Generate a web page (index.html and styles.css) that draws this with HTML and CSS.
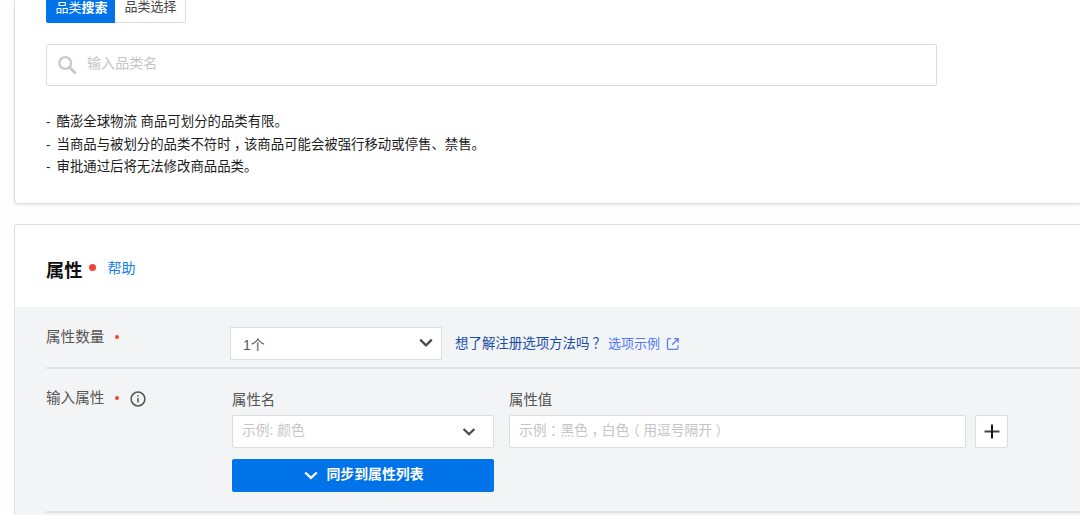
FILE: index.html
```html
<!DOCTYPE html>
<html lang="zh-CN">
<head>
<meta charset="utf-8">
<title>商品注册</title>
<link rel="stylesheet" href="styles.css">
</head>
<body>
<main class="page">
  <section class="card category">
    <div class="tabs">
      <button class="tab active">品类<b>搜索</b></button>
      <button class="tab">品类选择</button>
    </div>
    <div class="search">
      <svg width="20" height="20" viewBox="0 0 20 20" fill="none" stroke="#c9c9c9"><circle cx="8.2" cy="8" r="5.9" stroke-width="2.4"/><path d="M12.5 12.3l6.2 6.2" stroke-width="3"/></svg>
      <span class="placeholder">输入品类名</span>
    </div>
    <ul class="notes">
      <li>酷澎全球物流 商品可划分的品类有限。</li>
      <li>当商品与被划分的品类不符时<span class="mid">，</span>该商品可能会被强行移动或停售、禁售。</li>
      <li>审批通过后将无法修改商品品类。</li>
    </ul>
  </section>

  <section class="card attributes">
    <header class="head">
      <h2>属性</h2><i class="dot big"></i><a class="help">帮助</a>
    </header>
    <div class="form">
      <div class="row count">
        <div class="label"><span>属性数量</span><i class="dot"></i></div>
        <div class="select">
          <span>1个</span>
          <svg width="14" height="10" viewBox="0 0 14 10" fill="none" stroke="#4a4a4a" stroke-width="2.2"><path d="M1.2 1.6L7 7.4l5.8-5.8"/></svg>
        </div>
        <span class="question">想了解注册选项方法吗<span class="ask">？</span></span>
        <a class="example">选项示例</a>
        <svg class="external" width="14" height="14" viewBox="0 0 14 14" fill="none" stroke="#5c7cfa" stroke-width="1.3"><path d="M5 1.7H2.7a1.2 1.2 0 0 0-1.2 1.2v8.2a1.2 1.2 0 0 0 1.2 1.2h8.1a1.2 1.2 0 0 0 1.2-1.2V8.3M8 1.7h4.2v4M12.1 1.8L6.2 7.7"/></svg>
      </div>
      <div class="row entry">
        <div class="label"><span>输入属性</span><i class="dot"></i>
          <svg class="info" width="16" height="16" viewBox="0 0 16 16" fill="none" stroke="#555"><circle cx="8" cy="8" r="6.9" stroke-width="1.5"/><path d="M8 7v4.4M8 4.3v1.5" stroke-width="1.5"/></svg>
        </div>
        <div class="field name">
          <label>属性名</label>
          <div class="input">
            <span class="placeholder">示例: 颜色</span>
            <svg width="14" height="10" viewBox="0 0 14 10" fill="none" stroke="#4a4a4a" stroke-width="2.2"><path d="M1.6 2L7 7.3 12.4 2"/></svg>
          </div>
          <button class="sync">
            <svg width="14" height="10" viewBox="0 0 14 10" fill="none" stroke="#fff" stroke-width="2.2"><path d="M1.2 1.5L7 6.9l5.8-5.4"/></svg>
            <span>同步到属性列表</span>
          </button>
        </div>
        <div class="field value">
          <label>属性值</label>
          <div class="input"><span class="placeholder">示例<span class="mid">：</span>黑色<span class="mid">，</span>白色<span class="mid">（</span>用逗号隔开<span class="mid">）</span></span></div>
        </div>
        <button class="add" aria-label="添加">
          <svg width="16" height="16" viewBox="0 0 16 16" fill="none"><path d="M.5 7.5h15" stroke="#444" stroke-width="2"/><path d="M8 .5v14" stroke="#181820" stroke-width="2"/></svg>
        </button>
      </div>
    </div>
  </section>
</main>
</body>
</html>
```
FILE: styles.css
```css
* { box-sizing: border-box; }
body {
  margin: 0;
  height: 515px;
  overflow: hidden;
  background: #fefefe;
  color: #222;
  font-family: "Liberation Sans", "Noto Sans CJK SC", sans-serif;
  font-size: 14px;
}
button { margin: 0; padding: 0; font: inherit; }
svg { display: block; flex: none; }
.page { display: flex; flex-direction: column; gap: 20px; padding-left: 14px; }
.card { width: 100%; border: 1px solid #dfe0e4; border-right: 0; border-radius: 4px 0 0 4px; background: #fff; }
.category {
  height: 204px;
  padding-left: 31px;
  border-top: 0;
  border-radius: 0 0 0 4px;
  box-shadow: 0 1px 3px rgba(0, 0, 0, .1);
}
.tabs { display: flex; height: 23px; }
.tab {
  width: 71px;
  height: 23px;
  padding: 0 0 8px 1px;
  border: 1px solid #ddd;
  border-width: 0 1px 1px 0;
  border-radius: 0 0 2px 0;
  background: #fff;
  color: #444;
  font-size: 13px;
  line-height: 14px;
}
.tab.active {
  width: 69px;
  padding: 0 0 8px 2px;
  border: 0;
  border-radius: 0 0 0 2px;
  background: #0073e9;
  color: #fff;
}
.search {
  display: flex;
  align-items: center;
  gap: 10px;
  width: 891px;
  height: 42px;
  margin-top: 21px;
  padding-left: 10px;
  border: 1px solid #ddd;
  border-radius: 2px;
}
.search .placeholder { font-size: 14.1px; padding-bottom: 6px; }
.placeholder { color: #c5c5c5; white-space: nowrap; }
.notes { margin: 25px 0 0; padding: 0; list-style: none; color: #1c1c1c; font-size: 13.4px; line-height: 22.6px; }
.notes li { height: 22.6px; }
.notes li::before { content: "-"; display: inline-block; width: 10.5px; }
/* Full-width punctuation centred in its cell */
.mid { margin: 0 .25em; font-feature-settings: "halt"; }
.ask { margin-left: 3px; }
.attributes { height: 291px; border-bottom: 0; border-bottom-left-radius: 0; }
.head { display: flex; height: 82px; padding: 31px 0 0 31px; }
.head h2 { margin: 0; font-size: 18.2px; line-height: 31px; color: #111; }
.dot { flex: none; width: 4px; height: 4px; border-radius: 50%; background: #f44336; }
.dot.big { width: 7px; height: 7px; margin: 8px 0 0 7px; }
.help { margin-left: 11px; color: #1080ee; font-size: 14px; line-height: 25px; }
.form { height: 208px; padding-left: 31px; background: #f3f4f6; }
.row { display: flex; align-items: flex-start; border-bottom: 2px solid #e0e2e4; }
.row.count { height: 62px; padding-top: 20px; }
.label { display: flex; flex: none; width: 184px; color: #555; font-size: 14.6px; line-height: 20px; }
.label .dot { margin: 8px 0 0 11px; }
.label .info { margin: 3px 0 0 11px; }
.select {
  display: flex;
  align-items: center;
  justify-content: space-between;
  width: 212px;
  height: 33px;
  padding: 0 8px 0 12px;
  border: 1px solid #ddd;
  background: #fff;
  color: #555;
}
.select svg { margin-bottom: 1px; }
.question { margin-left: 13px; width: 153px; color: #174ea6; font-size: 13.45px; line-height: 33px; white-space: nowrap; }
.example { width: 58px; color: #4f78ff; font-size: 13px; line-height: 33px; }
.external { margin-top: 10px; }
.row.entry { height: 144px; padding-top: 19px; }
.field { display: flex; flex-direction: column; }
.field.name { width: 262px; margin-left: 2px; }
.field.value { width: 457px; margin-left: 15px; }
.field label { height: 27px; color: #555; font-size: 14.4px; line-height: 25px; }
.input {
  display: flex;
  align-items: center;
  justify-content: space-between;
  height: 33px;
  padding: 0 17px 0 9px;
  border: 1px solid #ddd;
  border-radius: 2px;
  background: #fff;
}
.input .placeholder { font-size: 13.8px; padding-bottom: 5px; }
.sync {
  display: flex;
  align-items: center;
  justify-content: center;
  gap: 8px;
  height: 33px;
  margin-top: 11px;
  padding: 0 4px 0 6px;
  border: 0;
  border-radius: 2px;
  background: #0073e9;
  color: #fff;
  font-size: 13.9px;
  font-weight: 700;
}
.sync span { padding-bottom: 5px; }
.add {
  display: flex;
  align-items: center;
  justify-content: center;
  width: 33px;
  height: 33px;
  margin: 27px 0 0 9px;
  border: 1px solid #ddd;
  border-radius: 2px;
  background: #fff;
}
```
